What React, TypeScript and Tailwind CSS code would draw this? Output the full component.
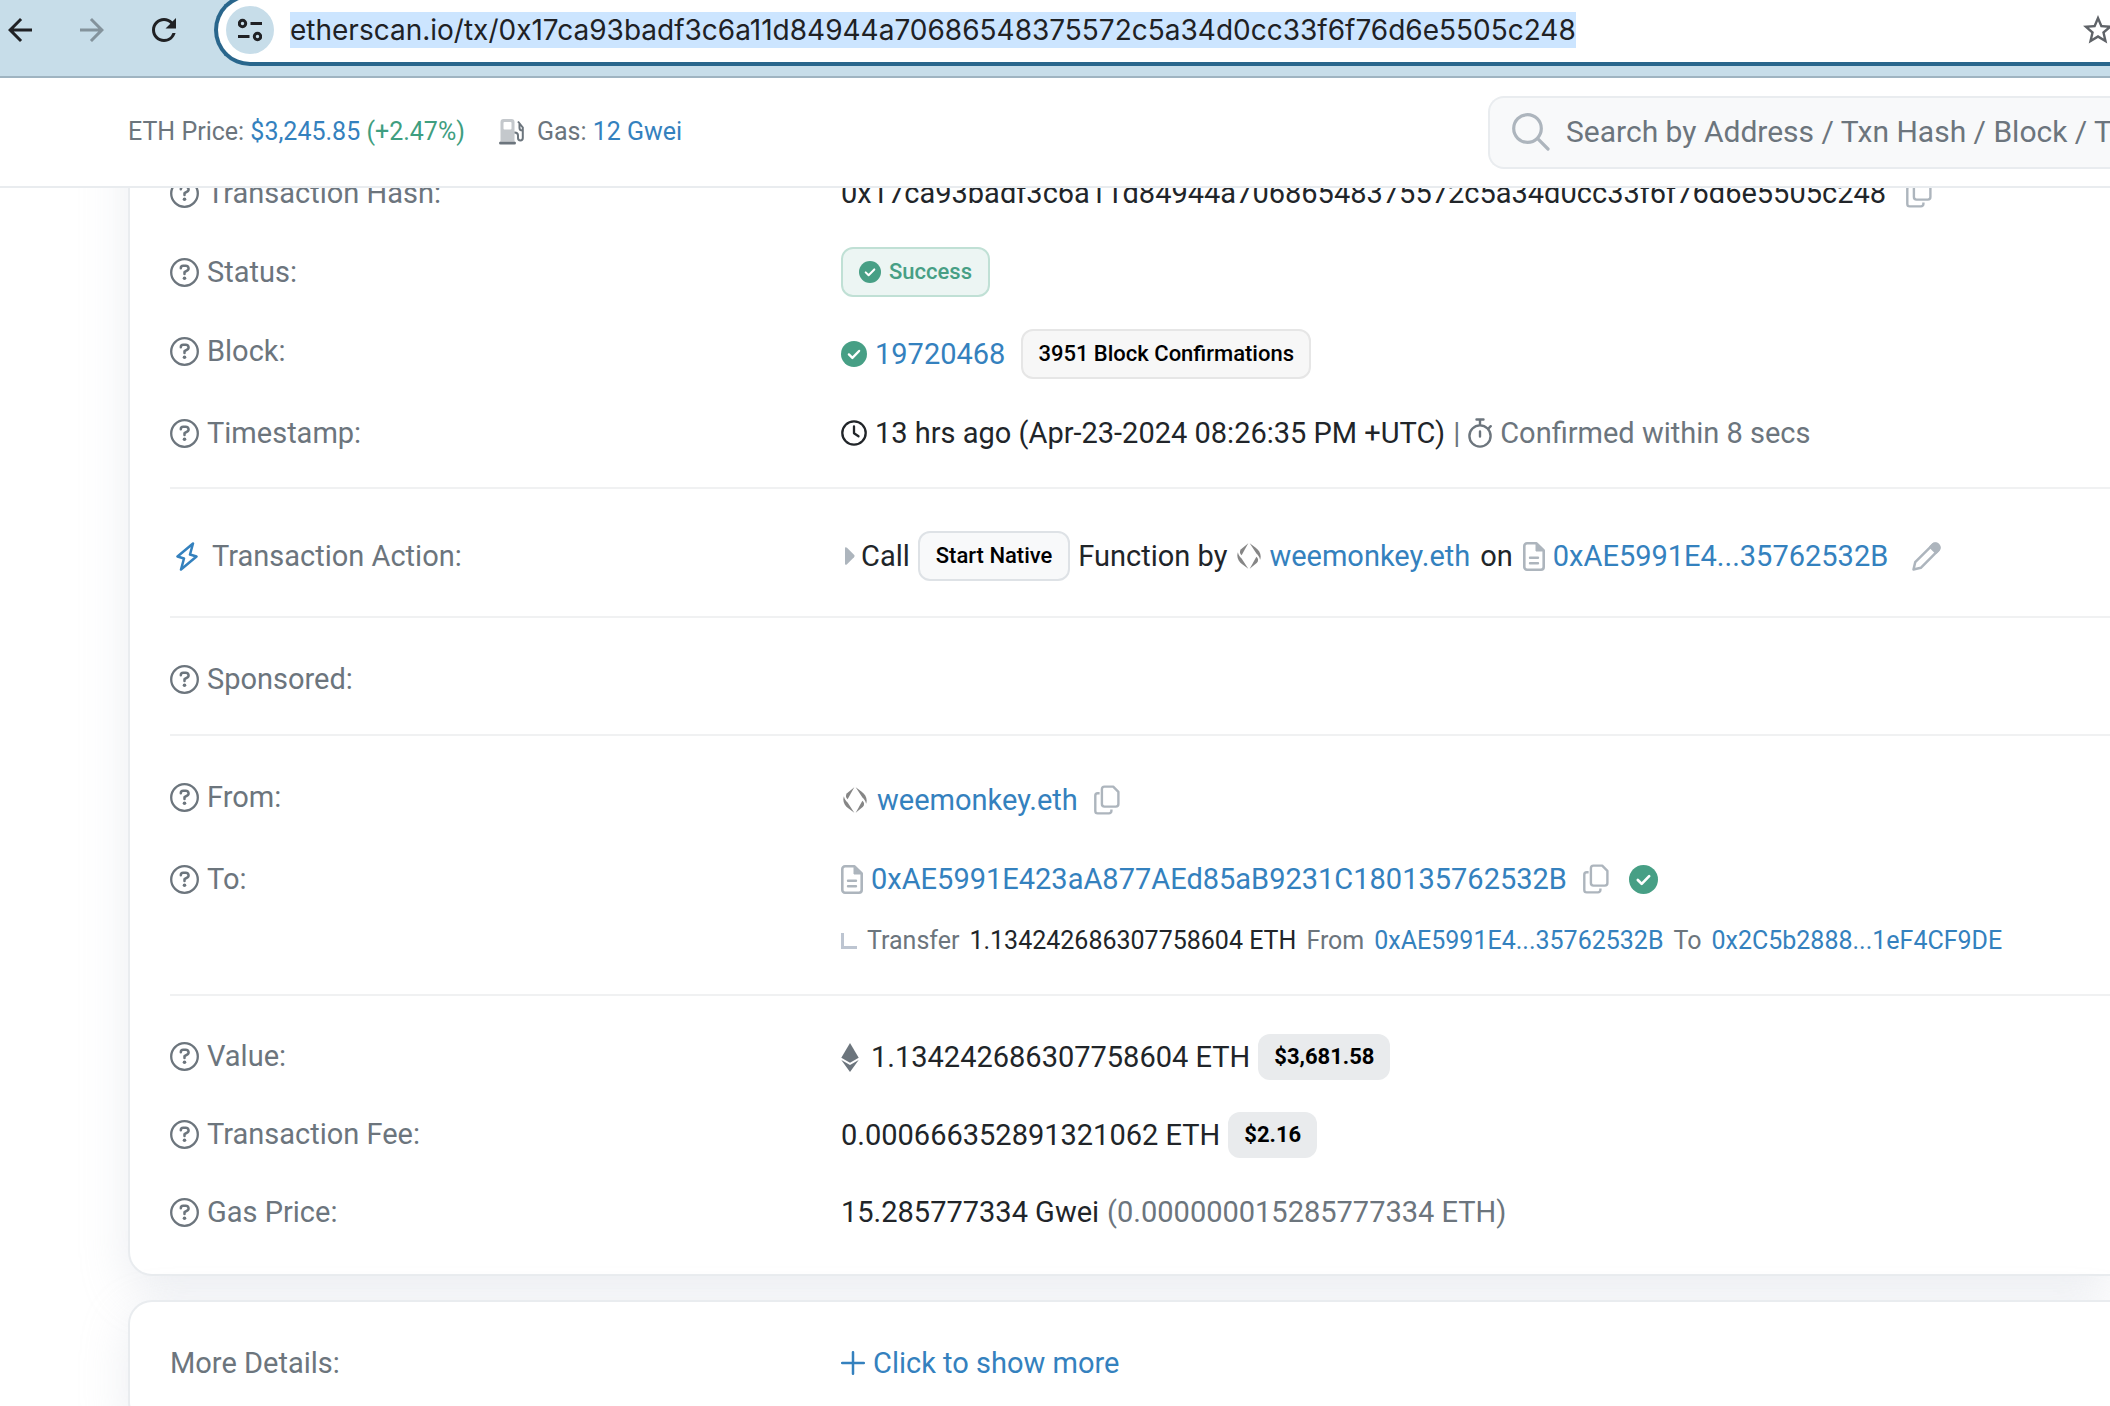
import React from "react";
import { MdArrowBack, MdArrowForward, MdRefresh, MdStarOutline } from "react-icons/md";

const TX_HASH = "0x17ca93badf3c6a11d84944a70686548375572c5a34d0cc33f6f76d6e5505c248";

type IconProps = { className?: string };

const QuestionIcon = () => (
  <svg viewBox="0 0 29 29" className="size-[29px] shrink-0" fill="none" stroke="currentColor" strokeWidth="2.3">
    <circle cx="14.5" cy="14.5" r="13.3" />
    <path d="M10.8 10.2c0-1.5 1.1-2.4 2.4-2.4h2.6c3 0 3.7 3.6 1.3 4.9l-2.6 1.5v1.9" strokeWidth="2.5" strokeLinecap="round" strokeLinejoin="round" />
    <circle cx="14.5" cy="20.2" r="1.8" fill="currentColor" stroke="none" />
  </svg>
);

const CheckIcon = ({ className }: IconProps) => (
  <svg viewBox="0 0 24 24" className={className}>
    <circle cx="12" cy="12" r="12" fill="#479f85" />
    <path d="M7.3 12.4l3.2 3.2 6.2-6.4" fill="none" stroke="#fff" strokeWidth="2.2" strokeLinecap="round" strokeLinejoin="round" />
  </svg>
);

const CopyIcon = () => (
  <svg viewBox="0 0 26 30" className="h-[30px] w-[26px]" fill="none" stroke="#adb5bd" strokeWidth="2.4" strokeLinejoin="round">
    <path d="M10.5 1.6h8.7l5.2 5.2v12.2a2.6 2.6 0 0 1-2.6 2.6h-11.3a2.6 2.6 0 0 1-2.6-2.6v-14.8a2.6 2.6 0 0 1 2.6-2.6z" />
    <path d="M5.6 8.3h-1.9a2.4 2.4 0 0 0-2.4 2.4v15.3a2.4 2.4 0 0 0 2.4 2.4h11.3a2.4 2.4 0 0 0 2.4-2.4v-1.4" />
  </svg>
);

const DocIcon = () => (
  <svg viewBox="0 0 22 29" className="h-[29px] w-[22px] shrink-0" fill="none" stroke="#adb5bd" strokeWidth="2.6">
    <path d="M4 1.3h9.5l7.2 7.2v16.5a2.7 2.7 0 0 1-2.7 2.7h-14a2.7 2.7 0 0 1-2.7-2.7v-21a2.7 2.7 0 0 1 2.7-2.7z" strokeLinejoin="round" />
    <path d="M13 1.3v7.7h7.7z" fill="#adb5bd" strokeWidth="1" />
    <path d="M7 15.8h8M7 21.2h8" strokeLinecap="round" strokeWidth="2.4" />
  </svg>
);

const EnsIcon = () => (
  <svg viewBox="0 0 24 26" className="h-[26px] w-6 shrink-0" fill="#868686">
    <path d="M11.3.2L4.6 12.3C2.8 10.8 2.2 8.2 4 6.2z" />
    <path d="M11.3 25.8L5.6 21.6C1.3 18.6-.8 14 .9 9.2c.6 2.800 1.900 4.600 3.700 6.200z" />
    <path d="M12.700 25.800L19.400 13.700c1.800 1.500 2.400 4.100.6 6.100z" />
    <path d="M12.700.2L18.400 4.400c4.300 3 6.400 7.600 4.700 12.400-.6-2.800-1.900-4.600-3.700-6.200z" />
  </svg>
);

const ClockIcon = () => (
  <svg viewBox="0 0 26 26" className="size-[26px]" fill="none" stroke="currentColor" strokeWidth="2.3" strokeLinecap="round" strokeLinejoin="round">
    <circle cx="13" cy="13" r="11.7" />
    <path d="M13 6.5v6.8l4.500 3" />
  </svg>
);

const StopwatchIcon = () => (
  <svg viewBox="0 0 24 30" className="h-[30px] w-6" fill="none" stroke="currentColor" strokeWidth="2.4" strokeLinecap="round">
    <circle cx="12" cy="18" r="10.6" />
    <path d="M12 13.5v5M12 1.5v5M8.5 1.5h7M20.5 10.5l2.2-2.3" />
  </svg>
);

const PencilIcon = () => (
  <svg viewBox="0 0 29 29" className="size-[29px]" fill="none" stroke="#adb5bd" strokeWidth="2.5" strokeLinejoin="round">
    <path d="M1.500 27.500l1.700-7.300L20.600 2.800a3.500 3.500 0 0 1 4.900 0l.7.7a3.500 3.500 0 0 1 0 4.900L8.800 25.800z" />
    <path d="M18.5 5l5.500 5.500 2.500-2.500a3.500 3.500 0 0 0 0-4.900l-.6-.6a3.500 3.500 0 0 0-4.900 0z" fill="#adb5bd" />
  </svg>
);

const BoltIcon = () => (
  <svg viewBox="0 0 22 29" className="h-[29px] w-[22px]" fill="none" stroke="#3481be" strokeWidth="2.500" strokeLinejoin="round">
    <path d="M17 1.500L1.500 14.500l6.500 2L5 27.500 20.500 14.500l-6.500-2z" />
  </svg>
);

const GasIcon = () => (
  <svg viewBox="0 0 26 26" className="size-[26px]">
    <path fill="#c4c8cc" fillRule="evenodd" d="M4.5 0h8A3 3 0 0 1 15.5 3v19H1.500V3a3 3 0 0 1 3-3zM4.500 4v5.500a1 1 0 0 0 1 1h6a1 1 0 0 0 1-1v-5.500a1 1 0 0 0-1-1h-6a1 1 0 0 0-1 1z" />
    <rect x="0" y="22.500" width="17" height="3" rx="1.500" fill="#6c757d" />
    <path d="M15.500 13.500c3 0 3.500 1.500 3.500 3v2.500a2.400 2.400 0 0 0 4.800 0V8.500L19 2.500M20.500 5v4c0 1.500 1.500 2.500 3 2.500" fill="none" stroke="#6c757d" strokeWidth="2" />
  </svg>
);

const EthIcon = () => (
  <svg viewBox="0 0 18 29" className="h-[29px] w-[18px]" fill="#6c757d">
    <path d="M9 0l8.700 14.800L9 19.800.3 14.800z" />
    <path d="M.3 17L9 22l8.700-5L9 29z" />
  </svg>
);

const SiteInfoIcon = () => (
  <svg viewBox="0 0 24 24" className="size-6" fill="none" stroke="#202124" strokeWidth="3">
    <circle cx="4.500" cy="5.500" r="3.200" />
    <circle cx="19.500" cy="18.500" r="3.200" />
    <path d="M12.500 5.500h11.500M0 18.500h11.500" />
  </svg>
);

const SearchIcon = () => (
  <svg viewBox="0 0 38 38" className="size-[38px] shrink-0" fill="none" stroke="#adb5bd" strokeWidth="3.200" strokeLinecap="round">
    <circle cx="15.500" cy="15.500" r="13.800" />
    <path d="M25.700 25.700L36 36" />
  </svg>
);

const Link = ({ children }: { children: React.ReactNode }) => (
  <a href="#" className="text-[#3481be]">
    {children}
  </a>
);

type RowProps = {
  label: string;
  icon?: React.ReactNode;
  centered?: boolean;
  children?: React.ReactNode;
};

const Row: React.FC<RowProps> = ({ label, icon = <QuestionIcon />, centered, children }) => (
  <div className={`grid grid-cols-[671px_1fr] ${centered ? "items-center" : "items-start"}`}>
    <dt className="flex items-center gap-2 text-[#6c757d]">
      {icon}
      {label}
    </dt>
    <dd className="flex items-center whitespace-nowrap">{children}</dd>
  </div>
);

const CopyButton = () => (
  <button type="button" aria-label="Copy">
    <CopyIcon />
  </button>
);

const Toolbar = () => (
  <div className="relative z-20 flex h-[78px] shrink-0 items-start border-b-2 border-[#9fb4c1] bg-[#c7dde9]">
    <div className="flex h-[60px] w-[214px] shrink-0 items-center gap-9 pl-0.5 text-[#202124]">
      <button type="button" aria-label="Back">
        <MdArrowBack className="size-9" />
      </button>
      <button type="button" aria-label="Forward" className="text-[#84939c]">
        <MdArrowForward className="size-9" />
      </button>
      <button type="button" aria-label="Reload">
        <MdRefresh className="size-9" />
      </button>
    </div>
    <div className="-mt-1.5 flex h-[72px] grow items-center rounded-l-full border-4 border-r-0 border-[#29668c] bg-white pl-2">
      <button type="button" aria-label="Site information" className="flex size-12 items-center justify-center rounded-full bg-[#c7dde9]">
        <SiteInfoIcon />
      </button>
      <div className="ml-4 grow font-[Inter,sans-serif] text-[28px] leading-9 text-[#202124]">
        <span className="inline-block bg-[#cce5ff]">etherscan.io/tx/{TX_HASH}</span>
      </div>
      <button type="button" aria-label="Bookmark" className="-mr-1.5 text-[#5f6368]">
        <MdStarOutline className="size-9" />
      </button>
    </div>
  </div>
);

const Header = () => (
  <header className="relative z-10 flex h-[110px] shrink-0 items-center justify-between border-b-2 border-[#e9ecef] bg-white pl-32 text-[25px] text-[#6c757d]">
    <div className="flex items-center whitespace-pre">
      <span>
        ETH Price: <Link>$3,245.85</Link> <span className="text-[#3f9e80]">(+2.47%)</span>
      </span>
      <span className="ml-[34px] mr-3">
        <GasIcon />
      </span>
      <span>
        Gas: <Link>12 Gwei</Link>
      </span>
    </div>
    <label className="flex h-[73px] w-[622px] items-center gap-4 rounded-l-2xl border-2 border-r-0 border-[#e9ecef] bg-[#f8f9fa] pl-[22px]">
      <SearchIcon />
      <input
        type="text"
        aria-label="Search"
        placeholder="Search by Address / Txn Hash / Block / Token"
        className="min-w-0 grow bg-transparent text-[30px] outline-none placeholder:text-[#6c757d]"
      />
    </label>
  </header>
);

const cardClass =
  "rounded-l-3xl border-2 border-r-0 border-[#e9ecef] bg-white pl-10 shadow-[0_16px_48px_rgba(189,197,209,0.3)]";

const App: React.FC = () => {
  return (
    <div className="flex h-screen flex-col overflow-hidden bg-white font-[Roboto,sans-serif] text-[29px] leading-[44px] text-[#212529]">
      <Toolbar />
      <Header />
      <main className="-mt-24 flex flex-col gap-6 pl-32">
        <dl className={`${cardClass} pt-[77px] pb-10`}>
          <div className="flex flex-col gap-8 pb-8">
            <Row label="Transaction Hash:">
              <span className="mr-5">{TX_HASH}</span>
              <CopyButton />
            </Row>
            <Row label="Status:" centered>
              <span className="flex h-[50px] items-center gap-2 rounded-xl border-2 border-[#c0e0d5] bg-[#ecf5f3] px-4 text-[22px] font-medium text-[#479f85]">
                <CheckIcon className="size-[22px]" />
                Success
              </span>
            </Row>
            <Row label="Block:">
              <CheckIcon className="mr-2 size-[26px]" />
              <Link>19720468</Link>
              <span className="ml-4 flex h-[50px] items-center rounded-xl border-2 border-[#e6e6e6] bg-[#f7f7f7] px-[15px] text-[22px] font-medium text-black">
                3951 Block Confirmations
              </span>
            </Row>
            <Row label="Timestamp:">
              <ClockIcon />
              <span className="ml-2">13 hrs ago (Apr-23-2024 08:26:35 PM +UTC)</span>
              <span className="mx-2 text-[#6c757d]">|</span>
              <span className="flex items-center gap-2 text-[#6c757d]">
                <StopwatchIcon />
                Confirmed within 8 secs
              </span>
            </Row>
          </div>
          <div className="border-t-2 border-[#f0f1f2] pt-[42px] pb-[35px]">
            <Row label="Transaction Action:" centered icon={<span className="mx-1.5"><BoltIcon /></span>}>
              <svg viewBox="0 0 10 18" className="ml-1 mr-1.5 h-[18px] w-2.5" fill="#adb5bd">
                <path d="M0 1.500C0 0 1 0 2 .8l7 7q1.200 1.200 0 2.400l-7 7C1 18 0 18 0 16.500z" />
              </svg>
              Call
              <span className="mx-2 flex h-[50px] items-center rounded-xl border-2 border-[#dee2e6] bg-[#f8f9fa] px-4 text-[22px] font-medium text-black">
                Start Native
              </span>
              <span className="mr-2.5">Function by</span>
              <EnsIcon />
              <span className="ml-2 mr-2.5">
                <Link>weemonkey.eth</Link>
              </span>
              <span className="mr-2.5">on</span>
              <DocIcon />
              <span className="ml-2 mr-6">
                <Link>0xAE5991E4...35762532B</Link>
              </span>
              <button type="button" aria-label="Edit">
                <PencilIcon />
              </button>
            </Row>
          </div>
          <div className="border-t-2 border-[#f0f1f2] pt-[39px] pb-[33px]">
            <Row label="Sponsored:" />
          </div>
          <div className="flex flex-col gap-8 border-t-2 border-[#f0f1f2] pt-[39px] pb-[33px]">
            <Row label="From:">
              <span className="flex h-[50px] items-center">
                <span className="ml-0.5 mr-2.5">
                  <EnsIcon />
                </span>
                <Link>weemonkey.eth</Link>
                <span className="ml-4 flex">
                  <CopyButton />
                </span>
              </span>
            </Row>
            <div>
              <Row label="To:">
                <DocIcon />
                <span className="ml-2 mr-4">
                  <Link>0xAE5991E423aA877AEd85aB9231C180135762532B</Link>
                </span>
                <CopyButton />
                <CheckIcon className="ml-5 size-[29px]" />
              </Row>
              <div className="mt-5 flex items-center gap-2.5 whitespace-nowrap pl-[671px] text-[25px] leading-10">
                <svg viewBox="0 0 16 16" className="size-4" fill="none" stroke="#bdc5d1" strokeWidth="3">
                  <path d="M1.500 0v14.500H16" />
                </svg>
                <span className="text-[#6c757d]">Transfer</span>
                <span>1.134242686307758604 ETH</span>
                <span className="text-[#6c757d]">From</span>
                <Link>0xAE5991E4...35762532B</Link>
                <span className="text-[#6c757d]">To</span>
                <Link>0x2C5b2888...1eF4CF9DE</Link>
              </div>
            </div>
          </div>
          <div className="flex flex-col gap-8 border-t-2 border-[#f0f1f2] pt-[38px]">
            <Row label="Value:">
              <EthIcon />
              <span className="ml-3">1.134242686307758604 ETH</span>
              <span className="ml-2 flex h-[46px] items-center rounded-xl bg-[#e9ebed] px-4 text-[22px] font-bold text-black">$3,681.58</span>
            </Row>
            <Row label="Transaction Fee:">
              0.000666352891321062 ETH
              <span className="ml-2 flex h-[46px] items-center rounded-xl bg-[#e9ebed] px-4 text-[22px] font-bold text-black">$2.16</span>
            </Row>
            <Row label="Gas Price:">
              15.285777334 Gwei
              <span className="ml-2 text-[#6c757d]">(0.000000015285777334 ETH)</span>
            </Row>
          </div>
        </dl>
        <dl className={`${cardClass} py-[39px]`}>
          <Row label="More Details:" icon={null}>
            <button type="button" className="flex items-center gap-2 text-[#3481be]">
              <svg viewBox="0 0 24 24" className="size-6" fill="none" stroke="currentColor" strokeWidth="2.500" strokeLinecap="round">
                <path d="M12 1.200v21.600M1.200 12h21.600" />
              </svg>
              Click to show more
            </button>
          </Row>
        </dl>
      </main>
    </div>
  );
};

export default App;
